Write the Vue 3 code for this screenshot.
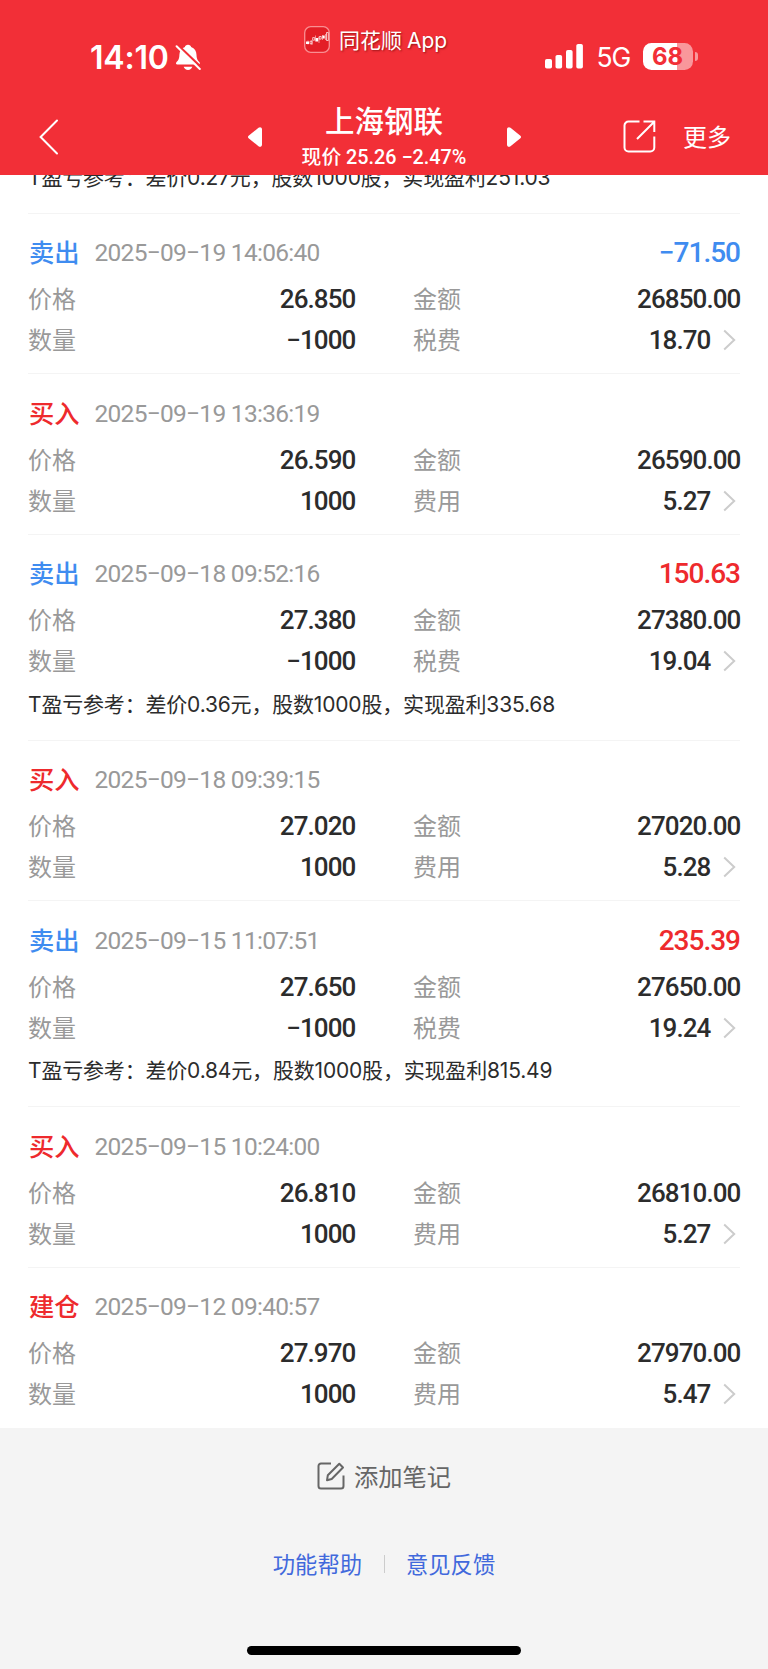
<template>
  <div class="page">
    <header class="header">
      <div class="status">
        <div class="clock">
          <span class="time">14:10</span>
          <svg class="bell" width="26" height="27" viewBox="0 0 26 27">
            <path d="M13 .8c1.8 0 2.8 1 3.1 2.2 3.6 1.2 5.3 4.2 5.4 7.8.1 4.3 1.300 5.700 3 7.500.7.8.4 2.300-.9 2.300H2.300c-1.300 0-1.700-1.500-.9-2.300 1.800-1.800 2.900-3.200 3-7.500C4.500 7.200 6.300 4.200 9.900 3 10.200 1.800 11.200.8 13 .8z" fill="#fff" />
            <path d="M8.700 22.700h8.600c-.5 2-2.200 3.200-4.300 3.200s-3.800-1.200-4.300-3.200z" fill="#fff" />
            <path d="M2.500.8 26 23.200" stroke="#f22f37" stroke-width="2.400" />
            <path d="M1.600 2.200 24.800 25" stroke="#fff" stroke-width="2" stroke-linecap="round" />
          </svg>
        </div>

        <div class="app">
          <svg width="26" height="27" viewBox="0 0 26 27">
            <rect x=".7" y=".7" width="24.600" height="25.600" rx="6" fill="#e31e26" stroke="#f98f92" stroke-width="1.300" />
            <path d="M4 14.500v4M8 14v5M11.500 9.500v6M15 11v6M18.500 9v5M21.500 8v6" stroke="#ffd9da" stroke-width=".6" />
            <path d="M2 15.500h3v2.500H2zM11.700 12h2.500v3.500h-2.500zM18.500 9.500h2.200v3h-2.200z" fill="#fff" />
            <path d="M6 15.200h2v2.600H6zM8.700 11.600h2v2.600h-2zM15.200 10.500h2v2.600h-2zM22.500 6.500h1.800v8h-1.800z" fill="none" stroke="#fff" stroke-width=".7" />
          </svg>
          <span>同花顺<i>App</i></span>
        </div>

        <div class="network">
          <svg width="39" height="25" viewBox="0 0 39 25" fill="#fff">
            <rect x="0" y="15" width="7" height="9.500" rx="1.800" />
            <rect x="10.500" y="11" width="6.600" height="13.500" rx="1.800" />
            <rect x="21" y="6" width="6.600" height="18.500" rx="1.800" />
            <rect x="31.300" y="0" width="6.600" height="24.500" rx="1.800" />
          </svg>
          <span class="net">5G</span>
          <div class="battery"><span>68</span></div>
          <i class="cap"></i>
        </div>
      </div>

      <nav class="nav">
        <svg class="back" width="20" height="36" viewBox="0 0 20 36">
          <path d="M18 1.500 1.600 18 18 34.500" fill="none" stroke="#fff" stroke-width="2" stroke-linecap="round" />
        </svg>
        <div class="stock">
          <svg class="arrow" width="14" height="20" viewBox="0 0 14 20">
            <path d="M.6 8.800 10.500.8C12 -.3 14 .4 14 2.300v15.400c0 1.900-2 2.600-3.500 1.500L.6 11.200c-.8-.7-.8-1.700 0-2.400z" fill="#fff" />
          </svg>
          <div class="names">
            <div class="name">上海钢联</div>
            <div class="quote">现价 25.26 −2.47%</div>
          </div>
          <svg class="arrow" width="14" height="20" viewBox="0 0 14 20">
            <path d="M13.400 8.800 3.500.8C2 -.3 0 .4 0 2.300v15.400c0 1.900 2 2.600 3.500 1.500l9.900-8c.8-.7.8-1.700 0-2.400z" fill="#fff" />
          </svg>
        </div>
        <div class="actions">
          <svg width="33" height="33" viewBox="0 0 33 33" fill="none" stroke="#fff" stroke-width="2">
            <path d="M16.500 1.600H5.500a4 4 0 0 0-4 4v21.800a4 4 0 0 0 4 4h21.800a4 4 0 0 0 4-4V16.500" />
            <path d="M14 19 31 2M20.500 1.600h10.800v10.300" />
          </svg>
          <span>更多</span>
        </div>
      </nav>
    </header>

    <main class="list">
      <div class="previous">
        <p class="note">T盈亏参考：差价0.27元，股数1000股，实现盈利251.03</p>
      </div>
      <section v-for="item in records" :key="item.time" class="record">
        <div class="head">
          <b class="type" :class="{ sell: item.type === '卖出' }">{{ item.type }}</b>
          <span class="date">{{ item.time }}</span>
          <span v-if="item.profit" class="profit" :class="{ loss: item.profit.startsWith('−') }">{{ item.profit }}</span>
        </div>
        <div class="grid">
          <div class="cell"><label>价格</label><span>{{ item.price }}</span></div>
          <div class="cell"><label>金额</label><span>{{ item.amount }}</span></div>
          <div class="cell"><label>数量</label><span>{{ item.count }}</span></div>
          <div class="cell">
            <label>{{ item.type === "卖出" ? "税费" : "费用" }}</label>
            <span>{{ item.fee }}</span>
            <svg class="more" width="13" height="22" viewBox="0 0 13 22">
              <path d="M1.200 1.500 11.200 11l-10 9.500" fill="none" stroke="#ccc" stroke-width="2" />
            </svg>
          </div>
        </div>
        <p v-if="item.note" class="note">{{ item.note }}</p>
      </section>
    </main>

    <footer class="footer">
      <div class="add">
        <svg width="28" height="28" viewBox="0 0 28 28" fill="none" stroke="#666" stroke-width="2">
          <path d="M14 1.500H4a2.500 2.500 0 0 0-2.500 2.500v20A2.500 2.500 0 0 0 4 26.500h20a2.500 2.500 0 0 0 2.500-2.500V13.500" />
          <path d="m10 18.300.8-5L22.300 1.800l3.700 3.700L14.700 17l-4.700 1.300z" stroke-linejoin="round" />
        </svg>
        <span>添加笔记</span>
      </div>
      <div class="links">
        <a>功能帮助</a>
        <i></i>
        <a>意见反馈</a>
      </div>
      <div class="home"></div>
    </footer>
  </div>
</template>

<script setup>
const records = [
  { type: "卖出", time: "2025−09−19 14:06:40", profit: "−71.50", price: "26.850", amount: "26850.00", count: "−1000", fee: "18.70" },
  { type: "买入", time: "2025−09−19 13:36:19", price: "26.590", amount: "26590.00", count: "1000", fee: "5.27" },
  {
    type: "卖出",
    time: "2025−09−18 09:52:16",
    profit: "150.63",
    price: "27.380",
    amount: "27380.00",
    count: "−1000",
    fee: "19.04",
    note: "T盈亏参考：差价0.36元，股数1000股，实现盈利335.68",
  },
  { type: "买入", time: "2025−09−18 09:39:15", price: "27.020", amount: "27020.00", count: "1000", fee: "5.28" },
  {
    type: "卖出",
    time: "2025−09−15 11:07:51",
    profit: "235.39",
    price: "27.650",
    amount: "27650.00",
    count: "−1000",
    fee: "19.24",
    note: "T盈亏参考：差价0.84元，股数1000股，实现盈利815.49",
  },
  { type: "买入", time: "2025−09−15 10:24:00", price: "26.810", amount: "26810.00", count: "1000", fee: "5.27" },
  { type: "建仓", time: "2025−09−12 09:40:57", price: "27.970", amount: "27970.00", count: "1000", fee: "5.47" },
];
</script>

<style>
body {
  margin: 0;
  background: #f4f4f4;
}
</style>

<style scoped>
.page {
  width: 768px;
  height: 1669px;
  display: flex;
  flex-direction: column;
  overflow: hidden;
  background: #f4f4f4;
  font-family: Roboto, "Noto Sans CJK SC", sans-serif;
  color: #2c2c2c;
}

svg {
  display: block;
  flex: none;
}

i {
  font-style: normal;
}

.header {
  height: 175px;
  flex: none;
  background: #f22f37;
  color: #fff;
}

.status {
  height: 99px;
  display: grid;
  grid-template-columns: 304px 1fr 223px;
  font-family: Inter, "Noto Sans CJK SC", sans-serif;
}

.clock {
  display: flex;
  align-items: center;
  height: 114px;
  padding-left: 90px;
}

.time {
  width: 85px;
  font-size: 32px;
  font-weight: 600;
  letter-spacing: -0.2px;
}

.app {
  display: flex;
  align-items: center;
  gap: 9px;
  height: 78px;
  font-size: 21px;
  white-space: nowrap;
}

.app span {
  padding-bottom: 1px;
  text-shadow: 1px 1px 2px rgba(90, 0, 0, 0.6);
}

.app i {
  margin-left: 5px;
}

.network {
  display: flex;
  align-items: center;
  height: 113px;
}

.net {
  width: 46px;
  margin-left: 12.5px;
  font-size: 26.5px;
  letter-spacing: -1px;
}

.battery {
  width: 50px;
  height: 27px;
  line-height: 27px;
  border-radius: 8.5px;
  background: linear-gradient(90deg, #fff 68%, #f9979b 68%);
  color: #f22f37;
  font-size: 24px;
  font-weight: 700;
  text-align: center;
}

.cap {
  width: 3px;
  height: 9px;
  margin-left: 2px;
  border-radius: 0 4px 4px 0;
  background: #f9979b;
}

.nav {
  height: 75px;
  display: flex;
  align-items: center;
  justify-content: space-between;
  padding: 0 37px 0 39px;
}

.stock {
  display: flex;
  align-items: center;
  justify-content: space-between;
  width: 273px;
  margin-left: 86px;
}

.names {
  text-align: center;
  white-space: nowrap;
}

.name {
  height: 38px;
  line-height: 40px;
  font-size: 29.5px;
  font-weight: 500;
}

.quote {
  height: 32px;
  line-height: 35px;
  font-size: 19.8px;
  font-weight: 500;
}

.actions {
  display: flex;
  align-items: center;
  gap: 27px;
  font-size: 24px;
}

.actions span {
  padding-bottom: 2px;
}

.list {
  flex: none;
  height: 1253px;
  background: #fff;
  overflow: hidden;
}

.previous {
  margin-top: -20.5px;
  padding: 0 28px 12.5px;
}

.record {
  padding: 17px 0 12.5px;
  margin: 0 28px;
  box-sizing: border-box;
  box-shadow: inset 0 1px #f4f4f4;
}

.head {
  display: flex;
  align-items: center;
  height: 46px;
  margin-bottom: 3px;
}

.type {
  width: 65.5px;
  padding: 0 0 3px 1px;
  font-size: 25.3px;
  font-weight: 500;
  color: #ee2a2d;
}

.type.sell,
.profit.loss {
  color: #3f8cf0;
}

.date {
  font-size: 24.5px;
  letter-spacing: -0.72px;
  color: #999;
}

.profit {
  margin-left: auto;
  font-size: 28px;
  font-weight: 500;
  letter-spacing: -1px;
  color: #ee2a2d;
}

.grid {
  display: grid;
  grid-template-columns: 1fr 1fr;
  grid-auto-rows: 41px;
  column-gap: 58px;
}

.cell {
  display: flex;
  align-items: center;
}

.cell label {
  margin-right: auto;
  padding-bottom: 3px;
  font-size: 24px;
  color: #999;
}

.cell span {
  margin-right: -0.5px;
  font-size: 26px;
  font-weight: 500;
  letter-spacing: -0.9px;
}

.more {
  margin: 0 4px 0 13px;
}

.note {
  height: 45.5px;
  line-height: 45.5px;
  margin: 0;
  font-family: Inter, "Noto Sans CJK SC", sans-serif;
  font-size: 21px;
  letter-spacing: -0.18px;
  white-space: nowrap;
}

.footer {
  display: flex;
  flex-direction: column;
  align-items: center;
}

.add {
  display: flex;
  align-items: center;
  gap: 9px;
  height: 96px;
  font-size: 24.3px;
  color: #666;
}

.add span {
  padding-bottom: 2px;
}

.links {
  display: flex;
  align-items: center;
  gap: 21.5px;
  height: 80px;
  font-size: 22.3px;
  color: #4169dc;
}

.links a {
  padding-bottom: 2px;
}

.links i {
  width: 1px;
  height: 18px;
  background: #ccc;
}

.home {
  width: 274px;
  height: 9px;
  margin-top: 41.5px;
  border-radius: 5px;
  background: #000;
}
</style>
